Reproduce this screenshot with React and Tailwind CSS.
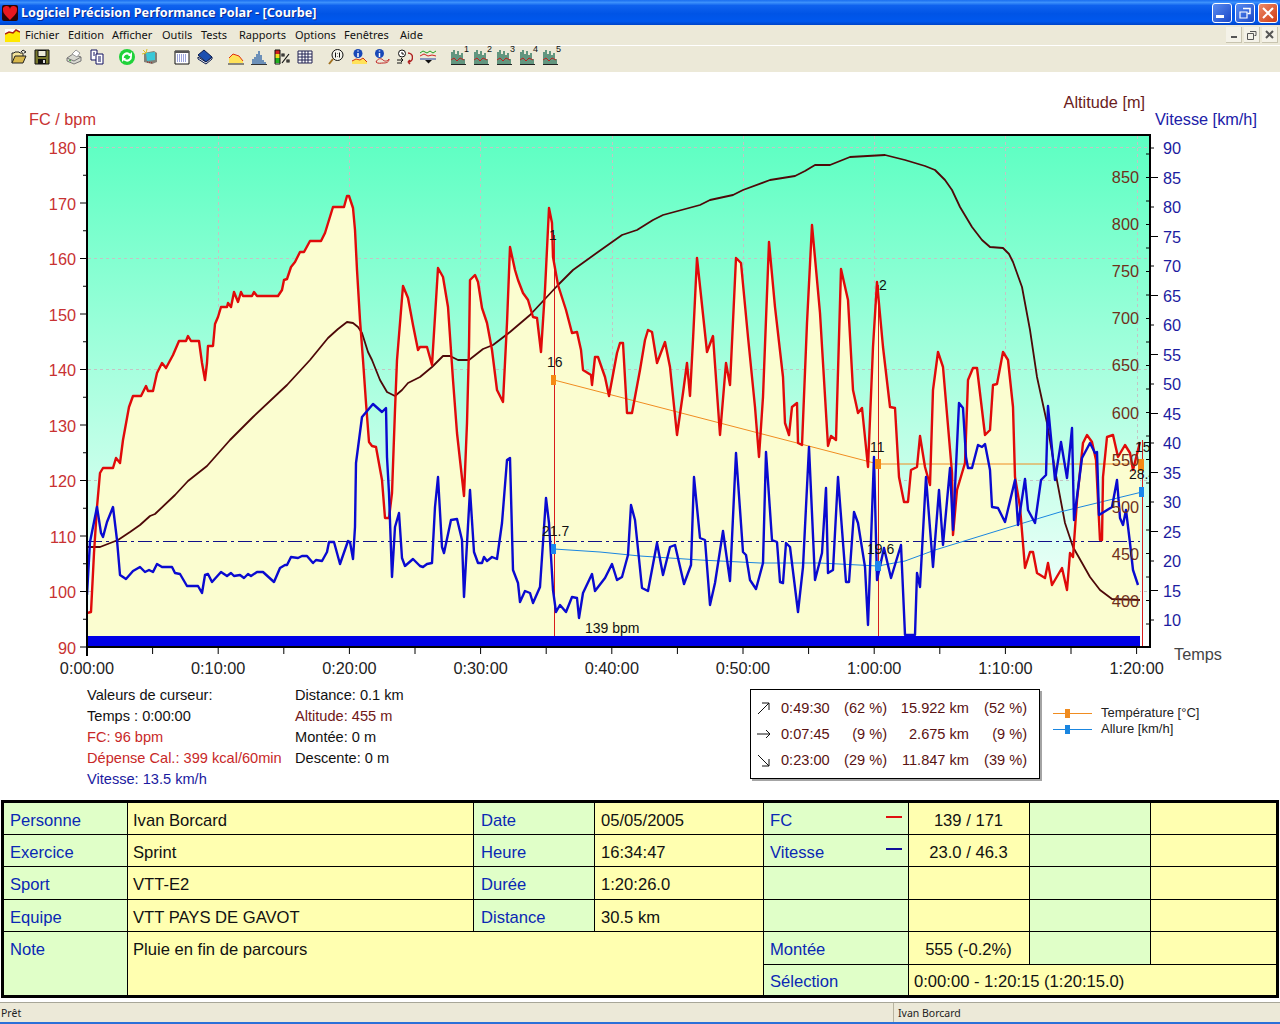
const red = "87,613 91,612 94,553 97,507 100,473 103,468 113,468 116,458 120,463 123,440 129,407 133,396 141,396 146,386 148,391 153,391 157,373 162,363 166,368 173,355 179,341 186,341 188,336 191,341 199,341 202,363 205,380 207,363 208,346 213,346 215,324 218,317 221,307 227,307 228,303 231,307 234,292 238,302 241,292 243,296 252,296 254,292 257,296 278,296 282,290 284,280 287,279 291,267 295,262 300,252 304,252 310,241 321,241 325,233 333,207 344,207 347,196 349,196 353,208 355,230 357,270 360,320 363,360 366,403 369,442 372,446 376,447 382,480 385,518 389,518 392,493 395,410 397,360 403,286 408,298 413,325 418,350 420,347 427,347 432,365 438,268 443,277 448,307 453,380 457,433 464,496 467,423 469,347 470,280 475,275 478,282 482,308 487,323 492,350 497,390 503,402 507,323 510,247 515,270 518,280 523,293 528,300 533,317 537,318 541,352 545,290 549,208 552,223 553,257 558,285 566,310 572,333 577,332 581,350 583,370 591,375 592,385 595,357 598,357 605,377 609,396 617,353 620,343 623,343 627,413 632,413 640,370 645,340 648,330 652,332 657,363 665,342 670,367 677,435 683,393 687,363 690,396 693,340 697,258 707,352 713,336 720,435 726,363 730,385 736,258 741,263 748,337 755,407 759,457 763,397 769,242 775,307 783,377 785,423 789,435 792,407 797,403 798,443 802,445 807,323 812,225 820,313 828,446 831,436 836,440 841,269 848,300 853,390 858,413 862,408 868,467 873,347 877,282 883,347 890,407 895,408 899,477 904,502 908,502 911,470 917,467 920,436 925,467 930,485 933,390 938,352 943,367 952,473 953,535 957,490 965,463 968,380 973,368 977,368 985,435 990,430 993,385 997,384 1003,352 1008,360 1013,407 1015,477 1020,507 1025,568 1030,552 1033,552 1037,573 1045,578 1048,563 1052,585 1062,568 1067,590 1070,553 1073,557 1077,500 1083,443 1087,435 1092,442 1096,460 1100,540 1102,540 1103,477 1107,437 1113,435 1118,457 1125,445 1130,453 1133,470 1140,442";

const blue = "87,595 90,542 97,507 101,533 103,537 107,522 113,507 117,540 120,575 126,579 133,571 140,567 145,572 149,570 153,572 157,564 162,567 167,567 172,567 175,573 180,574 187,586 198,586 202,593 205,575 208,574 212,582 221,572 227,576 231,573 234,576 240,575 244,578 248,574 251,576 257,572 263,572 274,582 280,568 285,565 287,565 291,557 298,558 302,556 307,556 313,563 316,560 322,561 327,552 329,542 334,542 340,564 348,541 350,542 353,559 355,527 356,463 362,417 373,404 382,412 386,408 387,457 389,493 392,577 395,527 399,513 402,558 405,566 413,559 420,566 423,567 427,564 432,563 435,507 438,477 442,547 444,553 451,520 457,519 462,540 464,597 470,490 474,552 478,563 482,563 484,557 487,561 492,557 497,559 502,523 507,460 510,458 513,570 518,583 520,602 525,591 530,593 533,603 540,587 546,498 549,523 553,590 556,612 560,605 566,612 572,597 577,598 579,618 583,593 592,574 595,591 605,578 612,564 617,580 622,577 628,555 631,505 635,520 642,588 648,591 657,543 663,575 670,547 675,545 684,584 691,565 694,477 700,538 705,540 710,605 715,583 723,531 730,581 736,453 743,552 746,555 750,580 756,589 763,563 766,452 772,540 777,542 780,582 783,583 786,543 790,547 798,612 803,567 809,447 815,580 822,553 826,488 828,573 833,570 838,477 846,582 849,582 854,512 858,523 865,567 868,625 874,457 877,580 884,548 891,578 901,545 905,635 915,635 917,573 920,587 926,477 933,567 939,490 943,545 950,468 953,530 959,403 963,408 966,457 968,468 972,468 978,445 982,447 985,444 990,470 992,507 998,508 1005,522 1015,480 1018,525 1025,479 1028,510 1035,523 1041,480 1046,475 1048,406 1055,480 1061,442 1067,478 1072,428 1074,520 1082,458 1090,443 1095,453 1097,452 1099,515 1112,507 1117,480 1120,518 1123,525 1126,510 1130,543 1133,570 1138,585";

const alt = "87,547 100,547 118,540 130,532 140,525 150,516 155,514 175,495 188,481 207,466 230,440 253,417 287,385 310,360 328,338 338,329 347,322 353,323 358,327 362,333 368,352 372,360 380,380 387,392 395,396 402,390 408,383 420,377 432,367 443,356 450,356 458,360 469,360 483,349 493,345 510,332 530,315 558,285 573,270 598,252 622,235 637,230 653,220 663,215 700,205 710,200 733,195 743,190 770,180 795,176 805,171 815,165 830,165 850,157 885,155 905,160 925,166 935,170 945,180 952,190 960,207 972,227 982,240 990,247 1003,248 1009,254 1013,262 1022,287 1030,330 1037,377 1047,423 1055,470 1065,523 1073,547 1090,577 1100,590 1112,599 1140,600";

const hrLabels = [180, 170, 160, 150, 140, 130, 120, 110, 100, 90];
const altLabels = [[850, 177], [800, 224], [750, 271], [700, 318], [650, 365], [600, 413], [550, 460], [500, 507], [450, 554], [400, 601]];
const speedLabels = [90, 85, 80, 75, 70, 65, 60, 55, 50, 45, 40, 35, 30, 25, 20, 15, 10];
const timeLabels = ["0:00:00", "0:10:00", "0:20:00", "0:30:00", "0:40:00", "0:50:00", "1:00:00", "1:10:00", "1:20:00"];

function Chart() {
  const ticks = [];
  for (let i = 0; i < 19; i++) ticks.push(647 - i * 27.75);
  const bottom = [];
  for (let i = 0; i < 17; i++) bottom.push(87 + i * 65.6);
  const right = [];
  for (let i = 0; i < 17; i++) right.push(148 + i * 29.5);
  const inner = [];
  for (let i = 1; i < 22; i++) inner.push(130 + 23.5 * i + 0.5);

  return (
    <svg width="1280" height="613" viewBox="0 72 1280 613" className="block">
      <defs>
        <linearGradient id="bg" x1="0" y1="0" x2="0" y2="1">
          <stop offset="0" stopColor="#5cffc2" />
          <stop offset="1" stopColor="#ffffff" />
        </linearGradient>
        <clipPath id="plot">
          <rect x="88" y="135" width="1061" height="511" />
        </clipPath>
      </defs>

      <rect x="87" y="135" width="1063" height="512" fill="url(#bg)" />
      {[147, 258, 369, 480, 591].map((y) => (
        <line key={y} x1="88" x2="1149" y1={y + 0.5} y2={y + 0.5} stroke="#c4c4c4" strokeDasharray="3 3" />
      ))}
      {[218, 349, 480, 612, 743, 874, 1005, 1137].map((x) => (
        <line key={x} x1={x + 0.5} x2={x + 0.5} y1="136" y2="646" stroke="#c4c4c4" strokeDasharray="3 3" />
      ))}
      <polygon points={`87,646 ${red} 1140,646`} fill="#fbfdd0" />

      <line x1="88" x2="1140" y1="541.5" y2="541.5" stroke="#10108a" strokeWidth="1" strokeDasharray="14 4 3 4" />
      <line x1="554.5" x2="554.5" y1="235" y2="637" stroke="#d81c1c" />
      <line x1="878.5" x2="878.5" y1="285" y2="637" stroke="#d81c1c" />
      <line x1="1142.5" x2="1142.5" y1="440" y2="647" stroke="#d81c1c" />

      <g clipPath="url(#plot)" fill="none" strokeLinejoin="round">
        <polyline points={alt} stroke="#4e0808" strokeWidth="1.8" />
        <polyline points="554,380 878,464 1142,464" stroke="#f08c20" />
        <polyline points="554,549 600,552 640,556 700,560 760,563 820,563 878,566 905,561 935,550 1000,530 1060,512 1142,492" stroke="#1a86e0" />
        <polyline points={red} stroke="#e00a0a" strokeWidth="2.4" />
        <polyline points={blue} stroke="#0a0ad0" strokeWidth="2.4" />
      </g>

      <rect x="551" y="375" width="5" height="10" fill="#f58a14" />
      <rect x="875" y="459" width="6" height="10" fill="#f58a14" />
      <rect x="1138" y="459" width="6" height="12" fill="#f58a14" />
      <rect x="551" y="544" width="5" height="10" fill="#1a86ee" />
      <rect x="875" y="561" width="6" height="10" fill="#1a86ee" />
      <rect x="1139" y="487" width="5" height="10" fill="#1a86ee" />

      <rect x="87" y="636" width="1053" height="10" fill="#0000e6" />
      <rect x="87" y="134" width="1063" height="2" fill="#000" />
      <rect x="86" y="134" width="2" height="522" fill="#000" />
      <rect x="87" y="646" width="1064" height="2" fill="#000" />
      <rect x="1149" y="134" width="2" height="514" fill="#000" />

      {ticks.map((y, i) => (
        <line key={y} x1={i % 2 ? 83 : 80} x2="87" y1={y} y2={y} stroke="#000" />
      ))}
      {bottom.map((x) => (
        <line key={x} x1={x} x2={x} y1="647" y2="654" stroke="#000" />
      ))}
      {right.map((y, i) => (
        <line key={y} x1="1150" x2={i % 2 ? 1158 : 1154} y1={y} y2={y} stroke="#000" />
      ))}
      {inner.map((y) => (
        <line key={y} x1="1146" x2="1150" y1={y} y2={y} stroke="#000" />
      ))}

      <g fontSize="16.3">
        <text x="29" y="125" fill="#c83232">FC / bpm</text>
        <text x="1145" y="108" textAnchor="end" fill="#6a1c1c">Altitude [m]</text>
        <text x="1155" y="125" fill="#2020a8">Vitesse [km/h]</text>
        <text x="1174" y="660" fill="#444">Temps</text>
        {hrLabels.map((v, i) => (
          <text key={v} x="76" y={154 + i * 55.5} textAnchor="end" fill="#c83232">{v}</text>
        ))}
        {altLabels.map(([v, y]) => (
          <text key={v} x="1139" y={y + 6} textAnchor="end" fill="#70301a">{v}</text>
        ))}
        {speedLabels.map((v, i) => (
          <text key={v} x="1163" y={154 + i * 29.5} fill="#1c1ca0">{v}</text>
        ))}
        {timeLabels.map((t, i) => (
          <text key={t} x={87 + i * 131.2} y="674" textAnchor="middle" fill="#222">{t}</text>
        ))}
      </g>

      <g fontSize="14" fill="#111">
        <text x="547" y="367">16</text>
        <text x="870" y="452">11</text>
        <text x="542" y="536">21.7</text>
        <text x="867" y="554">19.6</text>
        <text x="879" y="290">2</text>
        <text x="549" y="240">1</text>
        <text x="585" y="633">139 bpm</text>
        <g clipPath="url(#plot)">
          <text x="1135" y="452">15</text>
          <text x="1129" y="479">28.4</text>
        </g>
      </g>
    </svg>
  );
}

const Ico = ({ children }) => (
  <svg width="16" height="16" viewBox="0 0 16 16" className="block">{children}</svg>
);

const icons = {
  open: (
    <Ico>
      <path d="M1 14V4h2l1-1h4l1 1h3v3" fill="#f3e39a" stroke="#222" />
      <path d="M1 14l3-7h11l-3 7z" fill="#d8b84c" stroke="#222" />
      <path d="M10 3l2-2 3 2-2 1" fill="none" stroke="#222" />
    </Ico>
  ),
  save: (
    <Ico>
      <path d="M1 1h14v14H1z" fill="#77772c" stroke="#111" />
      <path d="M4 1.500h8v6H4z" fill="#ecead8" stroke="#111" />
      <path d="M4 10h8v5H4z" fill="#111" />
      <path d="M9 11h2v3H9z" fill="#ddd" />
    </Ico>
  ),
  print: (
    <Ico>
      <path d="M1 9l6-4 8 3v4l-7 3-7-3z" fill="#d8d8d0" stroke="#777" />
      <path d="M6 5l4-4 4 3-3 4z" fill="#fff" stroke="#999" />
      <path d="M1 9l7 3 7-4" fill="none" stroke="#777" />
      <path d="M3 11l2 1" stroke="#2a9a2a" />
    </Ico>
  ),
  copy: (
    <Ico>
      <path d="M2 1h6v10H2z" fill="#fff" stroke="#101060" />
      <path d="M7 5h7v10H7z" fill="#fff" stroke="#101060" />
      <path d="M4 4h2M4 6h2M9 8h3M9 10h3M9 12h3" stroke="#101060" />
    </Ico>
  ),
  sync: (
    <Ico>
      <circle cx="8" cy="8" r="8" fill="#1fd23a" />
      <path d="M4 9a4 4 0 0 1 6-4l1 1M12 7a4 4 0 0 1-6 4l-1-1" fill="none" stroke="#fff" strokeWidth="2" />
      <path d="M9 7h4V3zM7 9H3v4z" fill="#fff" />
    </Ico>
  ),
  globe: (
    <Ico>
      <path d="M2 4l10-2 3 2v9l-5 2-8-2z" fill="#808078" />
      <path d="M4 4l9-1v8l-8 1z" fill="#38c8d8" />
      <path d="M1 1l3 3M5 0l-1 4M0 5l4-1" stroke="#d8c020" />
      <path d="M5 13l6 1" stroke="#a02020" strokeDasharray="1 1" />
    </Ico>
  ),
  cal: (
    <Ico>
      <path d="M1 2h14v13H1z" fill="#fff" stroke="#111" />
      <path d="M1 2h14v2H1z" fill="#555" />
      <path d="M3 6h10M3 8h10M3 10h10M3 12h10" stroke="#3a4ab8" strokeDasharray="1 1" />
    </Ico>
  ),
  book: (
    <Ico>
      <path d="M1 8v2l8 5 6-5V8l-6 5z" fill="#f4f4f4" stroke="#0a1a4a" />
      <path d="M1 6l6-5 8 7-6 5z" fill="#1c50b0" stroke="#0a1a4a" />
    </Ico>
  ),
  area: (
    <Ico>
      <path d="M1 14V9l4-4 3 1 3 1 4 5v2z" fill="#ffe25a" />
      <path d="M1 9l4-4 3 1 3 1 4 5" fill="none" stroke="#e03010" />
      <path d="M0 15h16" stroke="#222" />
    </Ico>
  ),
  hist: (
    <Ico>
      <path d="M2 15v-5M4 15V8M6 15V5M8 15V2M10 15V6M12 15v-4M14 15v-2" stroke="#2860a8" strokeWidth="1.3" />
      <path d="M0 15.500h16" stroke="#333" />
    </Ico>
  ),
  pct: (
    <Ico>
      <path d="M1 1h5v4H1z" fill="#d02020" />
      <path d="M1 5h5v4H1z" fill="#f0e020" />
      <path d="M1 9h5v5H1z" fill="#20b020" />
      <path d="M1 1h5v14H1z" fill="none" stroke="#111" />
      <path d="M8 14l7-9M8 5h2v2H8zM13 11h2v2h-2z" stroke="#111" fill="none" strokeWidth="1.2" />
    </Ico>
  ),
  table: (
    <Ico>
      <path d="M1 2h14v12H1z" fill="#fff" stroke="#202050" />
      <path d="M1 5h14M1 8h14M1 11h14M5 2v12M8 2v12M11 2v12" stroke="#202050" />
    </Ico>
  ),
  zoom: (
    <Ico>
      <circle cx="9.500" cy="6" r="5.500" fill="#f4f4ec" stroke="#111" />
      <path d="M5 10l-4 5" stroke="#a07020" strokeWidth="2" />
      <path d="M7.500 3.500v5M9.500 4.500v.5M9.500 7v.5M11.500 3.500v5" stroke="#111" />
    </Ico>
  ),
  infoArea: (
    <Ico>
      <circle cx="7" cy="4.500" r="4.500" fill="#1848b8" />
      <path d="M7 1.500v1M7 4v4" stroke="#fff" strokeWidth="1.500" />
      <path d="M1 15v-3l4-2 4 1 3-2 4 4v2z" fill="#ffe25a" />
      <path d="M1 12l4-2 4 1 3-2 4 4" fill="none" stroke="#d03010" />
    </Ico>
  ),
  infoLoop: (
    <Ico>
      <circle cx="5.500" cy="4.500" r="4.500" fill="#1848b8" />
      <path d="M5.500 1.500v1M5.500 4v4" stroke="#fff" strokeWidth="1.500" />
      <path d="M2 13c2-4 5-4 7-2s5 1 6-1c0 4-4 4-6 4s-5 1-7-1z" fill="none" stroke="#c02020" />
    </Ico>
  ),
  clock: (
    <Ico>
      <circle cx="5" cy="4.500" r="3.500" fill="#fff" stroke="#111" />
      <path d="M5 3v2h2" stroke="#111" fill="none" />
      <path d="M0 11h6M4 9l2 2-2 2M0 14h5" stroke="#111" fill="none" />
      <path d="M11 4a4.500 4.500 0 0 1 0 9M11 13l2-2M11 13l2 2" stroke="#b02020" strokeWidth="1.500" fill="none" />
    </Ico>
  ),
  lines: (
    <Ico>
      <path d="M0 4l3-2 4 2 3-2 3 2 3-2" stroke="#20a020" fill="none" />
      <path d="M0 7l4-2 4 2 4-1 4 1" stroke="#d02020" fill="none" />
      <path d="M0 10h16" stroke="#2040a0" />
      <path d="M5 11h7l-3.500 3.500z" fill="#111" />
    </Ico>
  ),
};

const Bars = ({ n }) => (
  <div className="relative w-[16px] h-[16px]">
    <svg width="16" height="16" viewBox="0 0 16 16" className="block">
      <path d="M1 15V3M3 15V1M5 15V5M7 15V2M9 15V6M11 15V4M13 15v-5" stroke="#1a6a50" strokeWidth="1.300" />
      <path d="M0 11l3-2 3 3 3-3 4 2" stroke="#c02020" fill="none" />
      <path d="M0 15.500h15" stroke="#222" />
    </svg>
    <span className="absolute left-[13px] top-[-4px] text-[9px] leading-[9px] text-[#111]">{n}</span>
  </div>
);

const toolbar = [
  ["open", 0], ["save", 0], ["print", 9], ["copy", 0], ["sync", 7], ["globe", 0],
  ["cal", 9], ["book", 0], ["area", 8], ["hist", 0], ["pct", 0], ["table", 0],
  ["zoom", 8], ["infoArea", 0], ["infoLoop", 0], ["clock", 0], ["lines", 0],
];

const menus = [
  ["Fichier", "w-[43px]"], ["Edition", "w-[44px]"], ["Afficher", "w-[50px]"], ["Outils", "w-[39px]"],
  ["Tests", "w-[38px]"], ["Rapports", "w-[56px]"], ["Options", "w-[49px]"], ["Fenêtres", "w-[56px]"], ["Aide", "w-[30px]"],
];

const WinBtn = ({ className, children }) => (
  <div className={`w-[20px] h-[20px] rounded-[3px] border border-white flex items-center justify-center ${className}`}>
    {children}
  </div>
);

const MdiBtn = ({ children }) => (
  <div className="w-[16px] h-[16px] bg-[#f4f2e8] border-r border-b border-[#c8c4b0] flex items-center justify-center">
    {children}
  </div>
);

const G = ({ className = "", children }) => (
  <div className={`bg-[#e0ffc8] text-[#0a28b4] pl-[6px] flex items-center pt-[5px] ${className}`}>{children}</div>
);
const Y = ({ className = "", children }) => (
  <div className={`bg-[#ffffb0] text-[#111] pl-[5px] flex items-center pt-[5px] ${className}`}>{children}</div>
);

const DataTable = () => (
  <div className="ml-[1px] w-[1278px] h-[198px] grid grid-cols-[123px_345px_120px_168px_144px_120px_120px_125px] grid-rows-[31px_31px_32px_31px_32px_30px] gap-px bg-black border-[3px] border-black text-[16.6px] leading-none">
    <G>Personne</G><Y>Ivan Borcard</Y><G className="pl-[7px]">Date</G><Y className="pl-[6px]">05/05/2005</Y>
    <G className="justify-between pr-[6px]">FC<span className="w-[16px] h-[2px] bg-[#e01010] -mt-[8px]" /></G>
    <Y className="justify-center pl-0 pr-[6px]">139 / 171</Y><G /><Y />
    <G>Exercice</G><Y>Sprint</Y><G className="pl-[7px]">Heure</G><Y className="pl-[6px]">16:34:47</Y>
    <G className="justify-between pr-[6px]">Vitesse<span className="w-[16px] h-[2px] bg-[#10109a] -mt-[8px]" /></G>
    <Y className="justify-center pl-0 pr-[6px]">23.0 / 46.3</Y><G /><Y />
    <G>Sport</G><Y>VTT-E2</Y><G className="pl-[7px]">Durée</G><Y className="pl-[6px]">1:20:26.0</Y><G /><Y /><G /><Y />
    <G>Equipe</G><Y>VTT PAYS DE GAVOT</Y><G className="pl-[7px]">Distance</G><Y className="pl-[6px]">30.5 km</Y><G /><Y /><G /><Y />
    <G className="row-span-2 items-start pt-[10px]">Note</G>
    <Y className="row-span-2 col-span-3 items-start pt-[10px]">Pluie en fin de parcours</Y>
    <G>Montée</G><Y className="justify-center pl-0 pr-[6px]">555 (-0.2%)</Y><G /><Y />
    <G>Sélection</G><Y className="col-span-3">0:00:00 - 1:20:15 (1:20:15.0)</Y>
  </div>
);

const boxRows = [
  ["M1 13L12 2M5 2h7v7", "0:49:30", "(62 %)", "15.922 km", "(52 %)"],
  ["M0 7h13M9 3l4 4-4 4", "0:07:45", "(9 %)", "2.675 km", "(9 %)"],
  ["M1 2l11 11M12 6v7H5", "0:23:00", "(29 %)", "11.847 km", "(39 %)"],
];

export default function App() {
  return (
    <div className="w-[1280px] h-[1024px] overflow-hidden bg-white flex flex-col font-['Liberation_Sans',Arial,sans-serif]">
      {/* barre de titre */}
      <div className="h-[25px] shrink-0 flex items-center pl-[2px] pr-[2px] bg-[linear-gradient(180deg,#1a6ef0_0%,#3c90fb_10%,#0f62ee_22%,#0054e6_55%,#0058ee_85%,#0044c8_100%)]">
        <svg width="16" height="16" viewBox="0 0 16 16" className="shrink-0 rounded-[2px]">
          <rect width="16" height="16" fill="#2a0606" />
          <path d="M8 15C3 10 1 8 1 5a3.500 3.500 0 0 1 7-1 3.500 3.500 0 0 1 7 1c0 3-2 5-7 10z" fill="#e81820" />
        </svg>
        <span className="ml-[3px] text-[12.700px] font-bold font-['Noto_Sans',sans-serif] text-white [text-shadow:1px_1px_#0c2a90]">
          Logiciel Précision Performance Polar - [Courbe]
        </span>
        <div className="ml-auto flex gap-[3px]">
          <WinBtn className="bg-[linear-gradient(135deg,#5a8cf0,#1a48c8)]">
            <span className="w-[8px] h-[3px] bg-white mt-[8px] -ml-[5px]" />
          </WinBtn>
          <WinBtn className="bg-[linear-gradient(135deg,#5a8cf0,#1a48c8)]">
            <svg width="12" height="12" viewBox="0 0 12 12" fill="none" stroke="#fff">
              <path d="M4 1.500h7v5H8.500" strokeWidth="1.500" />
              <path d="M1 5h7v6H1z" strokeWidth="1.200" />
            </svg>
          </WinBtn>
          <WinBtn className="bg-[linear-gradient(135deg,#ec8a68,#d03c14)]">
            <svg width="12" height="12" viewBox="0 0 12 12" stroke="#fff" strokeWidth="2">
              <path d="M1 1l10 10M11 1L1 11" />
            </svg>
          </WinBtn>
        </div>
      </div>

      {/* menu */}
      <div className="h-[20px] shrink-0 bg-[#ece9d8] flex items-center pl-[5px] pr-[2px] text-[11px] text-[#111] font-['Noto_Sans',sans-serif]">
        <svg width="15" height="13" viewBox="0 0 15 13" className="mr-[5px] shrink-0">
          <rect width="15" height="13" fill="#fff" />
          <path d="M0 5l4-2 4 1 3-3 4 2v10H0z" fill="#ffe800" />
          <path d="M0 5l4-2 4 1 3-3 4 2" fill="none" stroke="#b02010" strokeWidth="1.500" />
        </svg>
        {menus.map(([m, w]) => (
          <span key={m} className={w}>{m}</span>
        ))}
        <div className="ml-auto flex gap-[2px]">
          <MdiBtn><span className="w-[6px] h-[2px] bg-[#555] mt-[5px]" /></MdiBtn>
          <MdiBtn>
            <svg width="10" height="10" viewBox="0 0 10 10" fill="none" stroke="#555">
              <path d="M3 1.500h6v4H7.500M.5 3.500h6v6h-6z" />
            </svg>
          </MdiBtn>
          <MdiBtn>
            <svg width="9" height="9" viewBox="0 0 9 9" stroke="#555" strokeWidth="2">
              <path d="M1 1l7 7M8 1L1 8" />
            </svg>
          </MdiBtn>
        </div>
      </div>

      {/* barre d'outils */}
      <div className="h-[27px] shrink-0 bg-[#ece9d8] border-t border-white flex items-center pl-[11px] pb-[4px]">
        {toolbar.map(([k, extra]) => (
          <div key={k} className="w-[23px] flex justify-start" style={extra ? { marginLeft: extra } : undefined}>
            {icons[k]}
          </div>
        ))}
        <div className="ml-[8px] flex gap-[7px]">
          {[1, 2, 3, 4, 5].map((n) => <Bars key={n} n={n} />)}
        </div>
      </div>

      <Chart />

      {/* valeurs de curseur */}
      <div className="h-[115px] shrink-0 flex pl-[87px] text-[14.600px] leading-[21px] text-[#111]">
        <div className="w-[208px] shrink-0">
          <div>Valeurs de curseur:</div>
          <div>Temps : 0:00:00</div>
          <div className="text-[#c82828]">FC: 96 bpm</div>
          <div className="text-[#c82828] whitespace-nowrap">Dépense Cal.: 399 kcal/60min</div>
          <div className="text-[#1a1aa0]">Vitesse: 13.5 km/h</div>
        </div>
        <div className="w-[455px] shrink-0">
          <div>Distance: 0.1 km</div>
          <div className="text-[#701818]">Altitude: 455 m</div>
          <div>Montée: 0 m</div>
          <div>Descente: 0 m</div>
        </div>
        <div className="w-[290px] h-[90px] mt-[4px] shrink-0 border border-black bg-white pt-[5px] pl-[6px] shadow-[2px_2px_0_#a4a4a4] text-[#5a1212]">
          {boxRows.map(([d, a, b, c, e]) => (
            <div key={a} className="h-[26px] flex items-center">
              <svg width="14" height="15" viewBox="0 0 14 15" fill="none" stroke="#111" className="mr-[10px] shrink-0">
                <path d={d} />
              </svg>
              <span className="w-[56px]">{a}</span>
              <span className="w-[50px] text-right">{b}</span>
              <span className="w-[82px] text-right">{c}</span>
              <span className="w-[58px] text-right">{e}</span>
            </div>
          ))}
        </div>
        <div className="ml-[13px] mt-[20px] text-[13px] leading-[16px] text-[#222]">
          {[["Température [°C]", "bg-[#f08c20]"], ["Allure [km/h]", "bg-[#1a86e0]"]].map(([t, c]) => (
            <div key={t} className="flex items-center h-[16px]">
              <div className="relative w-[39px] h-[1px] mr-[9px]" >
                <div className={`absolute inset-0 ${c}`} />
                <div className={`absolute left-[12px] top-[-4px] w-[5px] h-[9px] ${c}`} />
              </div>
              {t}
            </div>
          ))}
        </div>
      </div>

      <DataTable />

      {/* barre d'état */}
      <div className="mt-[4px] h-[20px] shrink-0 bg-[#ece9d8] border-t border-[#a8a698] flex items-center text-[10.500px] text-[#222] font-['Noto_Sans',sans-serif]">
        <span className="pl-[1px] pt-[3px] w-[893px]">Prêt</span>
        <span className="pl-[4px] pt-[3px] border-l border-[#b8b4a0] h-full flex items-center">Ivan Borcard</span>
      </div>
      <div className="h-[2px] shrink-0 bg-[#2a70d8]" />
    </div>
  );
}
